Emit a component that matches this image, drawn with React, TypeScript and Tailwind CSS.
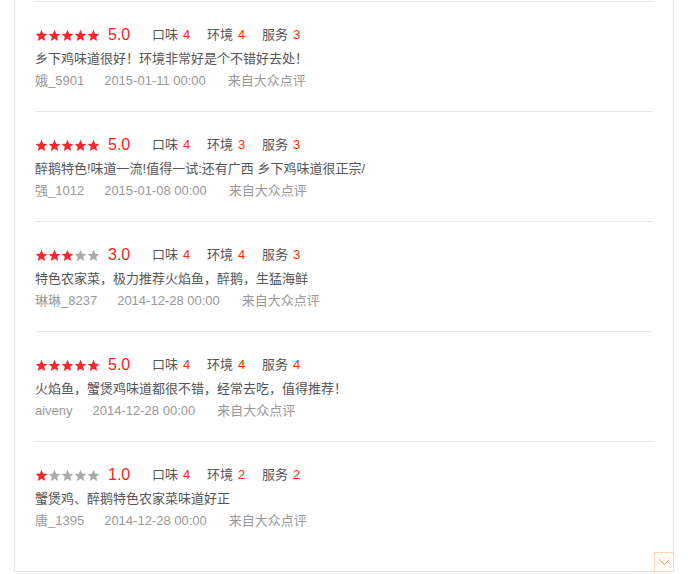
const REVIEWS = [
  { rating: 5, taste: 4, env: 4, service: 3, text: '乡下鸡味道很好！环境非常好是个不错好去处！', user: '娥_5901', date: '2015-01-11 00:00' },
  { rating: 5, taste: 4, env: 3, service: 3, text: '醉鹅特色!味道一流!值得一试:还有广西 乡下鸡味道很正宗/', user: '强_1012', date: '2015-01-08 00:00' },
  { rating: 3, taste: 4, env: 4, service: 3, text: '特色农家菜，极力推荐火焰鱼，醉鹅，生猛海鲜', user: '琳琳_8237', date: '2014-12-28 00:00' },
  { rating: 5, taste: 4, env: 4, service: 4, text: '火焰鱼，蟹煲鸡味道都很不错，经常去吃，值得推荐！', user: 'aiveny', date: '2014-12-28 00:00' },
  { rating: 1, taste: 4, env: 2, service: 2, text: '蟹煲鸡、醉鹅特色农家菜味道好正', user: '唐_1395', date: '2014-12-28 00:00' },
];

const FONT = { fontFamily: '"Liberation Sans", "Noto Sans CJK SC", sans-serif' };

// ── Star icon ─────────────────────────────────────────────────────────
function Star({ on }: { on: boolean }) {
  return (
    <svg width="13" height="13" viewBox="0 0 24 24" className="shrink-0">
      <path
        d="M12 1.5l3.1 7.2 7.8.6-5.9 5.1 1.8 7.6L12 17.9 5.2 22l1.8-7.6L1.1 9.3l7.8-.6z"
        fill={on ? '#f5282d' : '#aaaaaa'}
      />
    </svg>
  );
}

function Score({ label, value }: { label: string; value: number }) {
  return (
    <span className="w-[55px] shrink-0 text-[13px] text-[#555]">
      {label}<span className="ml-[5px] text-[#ff2a00]">{value}</span>
    </span>
  );
}

export default function App() {
  return (
    <div className="min-h-[574px] bg-white" style={FONT}>
      <div className="relative ml-[14px] w-[660px] h-[572px] border-x border-b border-[#e5e5e5] px-[20px] pt-[1px]">
        {REVIEWS.map((r, i) => (
          <div key={i} className="h-[110px] border-t border-[#e8e8e8] pt-[23px]">
            {/* rating row */}
            <div className="flex items-center h-[20px]">
              <div className="flex w-[63px]">
                {[0, 1, 2, 3, 4].map(k => (
                  <Star key={k} on={k < r.rating} />
                ))}
              </div>
              <span className="ml-[10px] w-[44px] text-[16px] leading-none text-[#ff1a1a]">
                {r.rating.toFixed(1)}
              </span>
              <Score label="口味" value={r.taste} />
              <Score label="环境" value={r.env} />
              <Score label="服务" value={r.service} />
            </div>

            {/* comment */}
            <div className="mt-[3px] text-[13px] leading-[22px] text-[#555]">{r.text}</div>

            {/* meta */}
            <div className="flex text-[13px] leading-[22px] text-[#999]">
              <span className="mr-[20px]">{r.user}</span>
              <span className="mr-[22px]">{r.date}</span>
              <span>来自大众点评</span>
            </div>
          </div>
        ))}

        {/* collapse toggle */}
        <div className="absolute right-[-1px] bottom-[-1px] w-[20px] h-[20px] border border-[#fbd8bd] bg-[#fffaf5] flex items-center justify-center">
          <svg width="11" height="7" viewBox="0 0 11 7">
            <polyline points="0.5,0.5 5.5,5.5 10.5,0.5" fill="none" stroke="#f06a0e" strokeWidth="1" strokeDasharray="1.2 0.6" />
          </svg>
        </div>
      </div>
    </div>
  );
}
